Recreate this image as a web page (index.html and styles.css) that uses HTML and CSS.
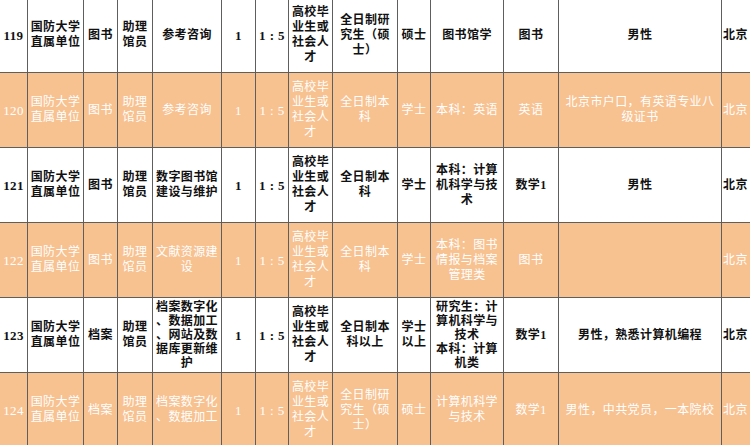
FILE: index.html
```html
<!DOCTYPE html>
<html lang="zh-CN">
<head>
<meta charset="utf-8">
<title>岗位表</title>
<link rel="stylesheet" href="styles.css">
</head>
<body>
<table class="jobs">
  <colgroup>
    <col class="c1"><col class="c2"><col class="c3"><col class="c4"><col class="c5"><col class="c6"><col class="c7"><col class="c8"><col class="c9"><col class="c10"><col class="c11"><col class="c12"><col class="c13"><col class="c14">
  </colgroup>
  <tbody>
    <tr class="plain">
      <td class="num">119</td>
      <td>国防大学<br>直属单位</td>
      <td>图书</td>
      <td>助理<br>馆员</td>
      <td>参考咨询</td>
      <td class="num">1</td>
      <td class="num">1 : 5</td>
      <td>高校毕<br>业生或<br>社会人<br>才</td>
      <td>全日制研<br>究生（硕<br>士）</td>
      <td>硕士</td>
      <td>图书馆学</td>
      <td>图书</td>
      <td>男性</td>
      <td class="loc">北京</td>
    </tr>
    <tr class="hl">
      <td class="num">120</td>
      <td>国防大学<br>直属单位</td>
      <td>图书</td>
      <td>助理<br>馆员</td>
      <td>参考咨询</td>
      <td class="num">1</td>
      <td class="num">1 : 5</td>
      <td>高校毕<br>业生或<br>社会人<br>才</td>
      <td>全日制本<br>科</td>
      <td>学士</td>
      <td>本科：英语</td>
      <td>英语</td>
      <td>北京市户口，有英语专业八<br>级证书</td>
      <td class="loc">北京</td>
    </tr>
    <tr class="plain">
      <td class="num">121</td>
      <td>国防大学<br>直属单位</td>
      <td>图书</td>
      <td>助理<br>馆员</td>
      <td>数字图书馆<br>建设与维护</td>
      <td class="num">1</td>
      <td class="num">1 : 5</td>
      <td>高校毕<br>业生或<br>社会人<br>才</td>
      <td>全日制本<br>科</td>
      <td>学士</td>
      <td>本科：计算<br>机科学与技<br>术</td>
      <td>数学1</td>
      <td>男性</td>
      <td class="loc">北京</td>
    </tr>
    <tr class="hl">
      <td class="num">122</td>
      <td>国防大学<br>直属单位</td>
      <td>图书</td>
      <td>助理<br>馆员</td>
      <td>文献资源建<br>设</td>
      <td class="num">1</td>
      <td class="num">1 : 5</td>
      <td>高校毕<br>业生或<br>社会人<br>才</td>
      <td>全日制本<br>科</td>
      <td>学士</td>
      <td>本科：图书<br>情报与档案<br>管理类</td>
      <td>图书</td>
      <td></td>
      <td class="loc">北京</td>
    </tr>
    <tr class="plain">
      <td class="num">123</td>
      <td>国防大学<br>直属单位</td>
      <td>档案</td>
      <td>助理<br>馆员</td>
      <td class="tight">档案数字化<br>、数据加工<br>、网站及数<br>据库更新维<br>护</td>
      <td class="num">1</td>
      <td class="num">1 : 5</td>
      <td>高校毕<br>业生或<br>社会人<br>才</td>
      <td>全日制本<br>科以上</td>
      <td>学士<br>以上</td>
      <td class="tight">研究生：计<br>算机科学与<br>技术<br>本科：计算<br>机类</td>
      <td>数学1</td>
      <td>男性，熟悉计算机编程</td>
      <td class="loc">北京</td>
    </tr>
    <tr class="hl">
      <td class="num">124</td>
      <td>国防大学<br>直属单位</td>
      <td>档案</td>
      <td>助理<br>馆员</td>
      <td>档案数字化<br>、数据加工</td>
      <td class="num">1</td>
      <td class="num">1 : 5</td>
      <td>高校毕<br>业生或<br>社会人<br>才</td>
      <td>全日制研<br>究生（硕<br>士）</td>
      <td>硕士</td>
      <td>计算机科学<br>与技术</td>
      <td>数学1</td>
      <td>男性，中共党员，一本院校</td>
      <td class="loc">北京</td>
    </tr>
  </tbody>
</table>
</body>
</html>
```
FILE: styles.css
```css
html, body {
  margin: 0;
  padding: 0;
  background: #ffffff;
  overflow: hidden;
  width: 750px;
  height: 445px;
}

.jobs {
  border-collapse: collapse;
  table-layout: fixed;
  width: 760px;
  margin-top: -3px;
  margin-left: -1px;
  font-family: "Liberation Serif", "Noto Sans CJK SC", serif;
  font-size: 12px;
  line-height: 15px;
  letter-spacing: 0.4px;
}

.c1 { width: 28px; }
.c2 { width: 56px; }
.c3 { width: 34px; }
.c4 { width: 35px; }
.c5 { width: 69px; }
.c6 { width: 34px; }
.c7 { width: 33px; }
.c8 { width: 44px; }
.c9 { width: 65px; }
.c10 { width: 33px; }
.c11 { width: 73px; }
.c12 { width: 55px; }
.c13 { width: 163px; }
.c14 { width: 38px; }

.jobs td {
  height: 74px;
  padding: 0 2px;
  border: 1px solid #5e5e5e;
  text-align: center;
  vertical-align: middle;
  white-space: nowrap;
  overflow: hidden;
}

.jobs td.loc {
  text-align: left;
  padding-left: 1px;
  border-right: none;
}

.jobs td.tight {
  line-height: 14px;
}

.plain td {
  background: #ffffff;
  color: #111111;
  font-weight: 700;
}

.hl td {
  background: #f8c190;
  color: #ffffff;
  font-weight: 400;
}

.num {
  font-size: 13px;
}
```
